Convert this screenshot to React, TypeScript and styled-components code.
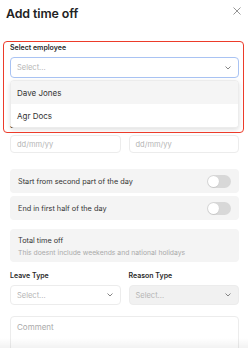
import React from "react";
import styled, { createGlobalStyle } from "styled-components";

const Global = createGlobalStyle`
  html, body { margin: 0; padding: 0; background: #fff; }
  body { font-family: Inter, "Noto Sans", sans-serif; color: #2a2a2a; width: 248px; height: 348px; overflow: hidden; }
  * { box-sizing: border-box; }
`;

const Page = styled.div`
  position: relative;
  width: 248px;
  height: 348px;
  overflow: hidden;
  background: #fff;
`;

const Header = styled.div`
  display: flex;
  align-items: center;
  justify-content: space-between;
  height: 27px;
  padding: 0 5px 0 6px;
`;

const Title = styled.h1`
  margin: 0;
  font-size: 12.4px;
  font-weight: 600;
  color: #222;
  letter-spacing: -0.1px;
`;

const Close = styled.button`
  border: 0;
  background: none;
  padding: 0;
  width: 10px;
  height: 10px;
  display: flex;
  color: #888;
  margin-top: -4px;
`;

const Body = styled.div`
  padding: 16px 9px 0 10px;
  display: flex;
  flex-direction: column;
`;

const Field = styled.div`
  position: relative;
  display: flex;
  flex-direction: column;
  gap: 4px;
`;

const Label = styled.label`
  font-size: 7px;
  font-weight: 600;
  color: #2a2a2a;
  line-height: 10px;
`;

const Control = styled.div<{ $focus?: boolean; $disabled?: boolean; $h?: number }>`
  display: flex;
  align-items: center;
  justify-content: space-between;
  height: ${(p) => p.$h ?? 20}px;
  padding: 0 7px 0 6px;
  border: 1px solid ${(p) => (p.$focus ? "#a9c3f3" : "#ececec")};
  border-radius: 4px;
  background: ${(p) => (p.$disabled ? "#f1f1f1" : "#fff")};
  font-size: 7.5px;
  color: #b4b4b4;
`;

const Chevron = () => (
  <svg width="6" height="4" viewBox="0 0 6 4" fill="none">
    <path d="M0.8 0.8 L3 3 L5.2 0.8" stroke="#777" strokeWidth="0.9" strokeLinecap="round" strokeLinejoin="round" />
  </svg>
);

const Menu = styled.div`
  position: absolute;
  left: 0;
  right: 0;
  top: 37px;
  background: #fff;
  border: 1px solid #ececec;
  border-radius: 4px;
  box-shadow: 0 2px 5px rgba(0, 0, 0, 0.12);
  overflow: hidden;
  z-index: 2;
`;

const Option = styled.div<{ $active?: boolean }>`
  height: 23px;
  display: flex;
  align-items: center;
  padding-left: 6px;
  font-size: 8px;
  color: #333;
  background: ${(p) => (p.$active ? "#f5f5f5" : "#fff")};
`;

const Highlight = styled.div`
  position: absolute;
  left: 3px;
  top: 41px;
  width: 241px;
  height: 92px;
  border: 1.5px solid #ec3b2a;
  border-radius: 4px;
  pointer-events: none;
  z-index: 3;
`;

const Row2 = styled.div<{ $mt: number }>`
  display: grid;
  grid-template-columns: 1fr 1fr;
  column-gap: 8px;
  margin-top: ${(p) => p.$mt}px;
`;

const ToggleList = styled.div`
  display: flex;
  flex-direction: column;
  gap: 3px;
  margin-top: 16px;
`;

const ToggleRow = styled.div`
  height: 24px;
  border-radius: 4px;
  background: #f4f4f4;
  display: flex;
  align-items: center;
  justify-content: space-between;
  padding: 0 8px 0 8px;
  font-size: 7.3px;
  color: #333;
`;

const Switch = styled.span`
  position: relative;
  width: 24px;
  height: 13px;
  border-radius: 7px;
  background: #d8d8d8;
  &::after {
    content: "";
    position: absolute;
    left: 1px;
    top: 1px;
    width: 11px;
    height: 11px;
    border-radius: 50%;
    background: #fff;
    box-shadow: 0 0.5px 1px rgba(0, 0, 0, 0.15);
  }
`;

const InfoBox = styled.div`
  margin-top: 9px;
  height: 33px;
  border-radius: 4px;
  background: #f4f4f4;
  padding: 7px 8px 0 8px;
  display: flex;
  flex-direction: column;
  gap: 2px;
`;

const InfoTitle = styled.div`
  font-size: 7.3px;
  color: #333;
  line-height: 10px;
`;

const InfoSub = styled.div`
  font-size: 6.8px;
  color: #aaa;
  line-height: 10px;
`;

const TextArea = styled.div`
  margin-top: 11px;
  height: 50px;
  border: 1px solid #ececec;
  border-radius: 4px;
  padding: 5px 6px;
  font-size: 8px;
  color: #aaa;
`;

const BottomFade = styled.div`
  position: absolute;
  left: 0;
  right: 0;
  bottom: 0;
  height: 10px;
  background: linear-gradient(to bottom, rgba(0, 0, 0, 0), rgba(0, 0, 0, 0.05));
  pointer-events: none;
  z-index: 4;
`;

export default function App() {
  return (
    <Page>
      <Global />
      <Header>
        <Title>Add time off</Title>
        <Close aria-label="Close">
          <svg width="8" height="8" viewBox="0 0 8 8">
            <path d="M0.5 0.5 L7.5 7.5 M7.5 0.5 L0.5 7.5" stroke="#8a8a8a" strokeWidth="0.9" />
          </svg>
        </Close>
      </Header>
      <Body>
        <Field>
          <Label>Select employee</Label>
          <Control $focus $h={21}>
            <span>Select...</span>
            <Chevron />
          </Control>
          <Menu>
            <Option $active>Dave Jones</Option>
            <Option>Agr Docs</Option>
          </Menu>
        </Field>
        <Row2 $mt={43}>
          <Field>
            <Label>Start date</Label>
            <Control $h={18}>
              <span>dd/mm/yy</span>
            </Control>
          </Field>
          <Field>
            <Label>End date</Label>
            <Control $h={18}>
              <span>dd/mm/yy</span>
            </Control>
          </Field>
        </Row2>
        <ToggleList>
          <ToggleRow>
            <span>Start from second part of the day</span>
            <Switch />
          </ToggleRow>
          <ToggleRow>
            <span>End in first half of the day</span>
            <Switch />
          </ToggleRow>
        </ToggleList>
        <InfoBox>
          <InfoTitle>Total time off</InfoTitle>
          <InfoSub>This doesnt include weekends and national holidays</InfoSub>
        </InfoBox>
        <Row2 $mt={9}>
          <Field>
            <Label>Leave Type</Label>
            <Control>
              <span>Select...</span>
              <Chevron />
            </Control>
          </Field>
          <Field>
            <Label>Reason Type</Label>
            <Control $disabled>
              <span>Select...</span>
              <Chevron />
            </Control>
          </Field>
        </Row2>
        <TextArea>Comment</TextArea>
      </Body>
      <Highlight />
      <BottomFade />
    </Page>
  );
}
